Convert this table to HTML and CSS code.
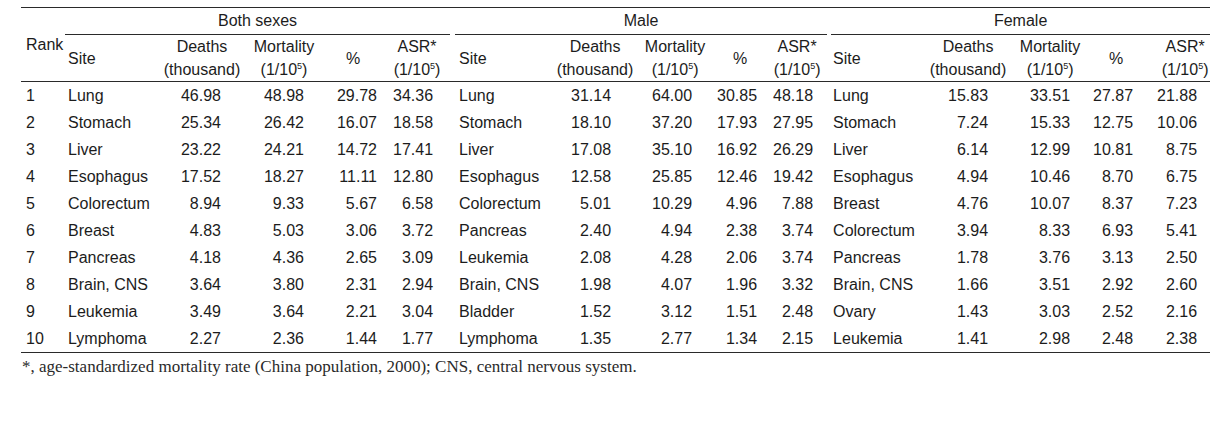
FILE: index.html
```html
<!DOCTYPE html>
<html>
<head>
<meta charset="utf-8">
<link rel="stylesheet" href="styles.css">
</head>
<body>
<div class="page">
<table class="tbl">
<colgroup>
<col class="c-rank">
<col class="c-site1"><col class="c-d"><col class="c-m"><col class="c-p1"><col class="c-a1">
<col class="c-site2"><col class="c-d"><col class="c-m2"><col class="c-p2"><col class="c-a2">
<col class="c-site3"><col class="c-d"><col class="c-m"><col class="c-p3"><col class="c-a3">
</colgroup>
<thead>
<tr class="grp-row">
<th class="rank-h" rowspan="2">Rank</th>
<th class="grp" colspan="5"><div class="grp-line g1">Both sexes</div></th>
<th class="grp" colspan="5"><div class="grp-line g2">Male</div></th>
<th class="grp" colspan="5"><div class="grp-line g3">Female</div></th>
</tr>
<tr class="sub-row">
<th class="site-h s1">Site</th><th>Deaths<br>(thousand)</th><th>Mortality<br>(1/10<sup>5</sup>)</th><th>%</th><th>ASR*<br>(1/10<sup>5</sup>)</th>
<th class="site-h s2">Site</th><th>Deaths<br>(thousand)</th><th>Mortality<br>(1/10<sup>5</sup>)</th><th>%</th><th>ASR*<br>(1/10<sup>5</sup>)</th>
<th class="site-h s3">Site</th><th>Deaths<br>(thousand)</th><th>Mortality<br>(1/10<sup>5</sup>)</th><th>%</th><th class="last-h">ASR*<br>(1/10<sup>5</sup>)</th>
</tr>
</thead>
<tbody>
<tr><td>1</td><td>Lung</td><td>46.98</td><td>48.98</td><td>29.78</td><td>34.36</td><td>Lung</td><td>31.14</td><td>64.00</td><td>30.85</td><td>48.18</td><td>Lung</td><td>15.83</td><td>33.51</td><td>27.87</td><td>21.88</td></tr>
<tr><td>2</td><td>Stomach</td><td>25.34</td><td>26.42</td><td>16.07</td><td>18.58</td><td>Stomach</td><td>18.10</td><td>37.20</td><td>17.93</td><td>27.95</td><td>Stomach</td><td>7.24</td><td>15.33</td><td>12.75</td><td>10.06</td></tr>
<tr><td>3</td><td>Liver</td><td>23.22</td><td>24.21</td><td>14.72</td><td>17.41</td><td>Liver</td><td>17.08</td><td>35.10</td><td>16.92</td><td>26.29</td><td>Liver</td><td>6.14</td><td>12.99</td><td>10.81</td><td>8.75</td></tr>
<tr><td>4</td><td>Esophagus</td><td>17.52</td><td>18.27</td><td>11.11</td><td>12.80</td><td>Esophagus</td><td>12.58</td><td>25.85</td><td>12.46</td><td>19.42</td><td>Esophagus</td><td>4.94</td><td>10.46</td><td>8.70</td><td>6.75</td></tr>
<tr><td>5</td><td>Colorectum</td><td>8.94</td><td>9.33</td><td>5.67</td><td>6.58</td><td>Colorectum</td><td>5.01</td><td>10.29</td><td>4.96</td><td>7.88</td><td>Breast</td><td>4.76</td><td>10.07</td><td>8.37</td><td>7.23</td></tr>
<tr><td>6</td><td>Breast</td><td>4.83</td><td>5.03</td><td>3.06</td><td>3.72</td><td>Pancreas</td><td>2.40</td><td>4.94</td><td>2.38</td><td>3.74</td><td>Colorectum</td><td>3.94</td><td>8.33</td><td>6.93</td><td>5.41</td></tr>
<tr><td>7</td><td>Pancreas</td><td>4.18</td><td>4.36</td><td>2.65</td><td>3.09</td><td>Leukemia</td><td>2.08</td><td>4.28</td><td>2.06</td><td>3.74</td><td>Pancreas</td><td>1.78</td><td>3.76</td><td>3.13</td><td>2.50</td></tr>
<tr><td>8</td><td>Brain, CNS</td><td>3.64</td><td>3.80</td><td>2.31</td><td>2.94</td><td>Brain, CNS</td><td>1.98</td><td>4.07</td><td>1.96</td><td>3.32</td><td>Brain, CNS</td><td>1.66</td><td>3.51</td><td>2.92</td><td>2.60</td></tr>
<tr><td>9</td><td>Leukemia</td><td>3.49</td><td>3.64</td><td>2.21</td><td>3.04</td><td>Bladder</td><td>1.52</td><td>3.12</td><td>1.51</td><td>2.48</td><td>Ovary</td><td>1.43</td><td>3.03</td><td>2.52</td><td>2.16</td></tr>
<tr><td>10</td><td>Lymphoma</td><td>2.27</td><td>2.36</td><td>1.44</td><td>1.77</td><td>Lymphoma</td><td>1.35</td><td>2.77</td><td>1.34</td><td>2.15</td><td>Leukemia</td><td>1.41</td><td>2.98</td><td>2.48</td><td>2.38</td></tr>
</tbody>
</table>
<p class="note">*, age-standardized mortality rate (China population, 2000); CNS, central nervous system.</p>
</div>
</body>
</html>
```

FILE: styles.css
```css
html, body {
  margin: 0;
  padding: 0;
  background: #ffffff;
}

.page {
  padding: 7px 0 0 21px;
}

.tbl {
  width: 1189px;
  table-layout: fixed;
  border-collapse: collapse;
  font-family: "Liberation Sans", Arial, sans-serif;
  font-size: 16px;
  color: #1c1c1c;
  border-top: 1px solid #2a2a2a;
  border-bottom: 1px solid #2a2a2a;
}

.c-rank { width: 44px; }
.c-site1 { width: 95px; }
.c-d { width: 84px; }
.c-m { width: 80px; }
.c-p1 { width: 58px; }
.c-a1 { width: 70px; }
.c-site2 { width: 101px; }
.c-m2 { width: 76px; }
.c-p2 { width: 54px; }
.c-a2 { width: 60px; }
.c-site3 { width: 99px; }
.c-p3 { width: 52px; }
.c-a3 { width: 68px; }

.tbl th {
  font-weight: normal;
  padding: 0;
  text-align: center;
  vertical-align: middle;
}

.grp-row .grp {
  height: 27px;
  vertical-align: top;
}

.grp-line {
  height: 26px;
  line-height: 25px;
  border-bottom: 1px solid #2a2a2a;
  text-align: center;
}

.g1 { margin-right: 2px; }
.g2 { margin-left: 3px; }
.g3 { margin-left: 4px; }

.rank-h {
  text-align: left !important;
  padding-left: 5px !important;
  border-bottom: 1px solid #2a2a2a;
}

.sub-row th {
  line-height: 23px;
  padding: 0;
  height: 44px;
  border-bottom: 1px solid #2a2a2a;
}

.sub-row .site-h {
  text-align: left;
}

.sub-row .s1 { padding-left: 3px; }
.sub-row .s2 { padding-left: 7px; }
.sub-row .s3 { padding-left: 6px; }
.sub-row .last-h { padding-left: 18px; }

.tbl sup {
  font-size: 9px;
  line-height: 0;
  vertical-align: 6px;
}

.tbl td {
  height: 27px;
  line-height: 27px;
  padding: 0;
  text-align: right;
  white-space: nowrap;
}

.tbl td:nth-child(1) { text-align: left; padding-left: 5px; }
.tbl td:nth-child(2) { text-align: left; padding-left: 3px; }
.tbl td:nth-child(3) { padding-right: 23px; }
.tbl td:nth-child(4) { padding-right: 20px; }
.tbl td:nth-child(5) { padding-right: 5px; }
.tbl td:nth-child(6) { padding-right: 19px; }
.tbl td:nth-child(7) { text-align: left; padding-left: 7px; }
.tbl td:nth-child(8) { padding-right: 26px; }
.tbl td:nth-child(9) { padding-right: 21px; }
.tbl td:nth-child(10) { padding-right: 10px; }
.tbl td:nth-child(11) { padding-right: 14px; }
.tbl td:nth-child(12) { text-align: left; padding-left: 6px; }
.tbl td:nth-child(13) { padding-right: 22px; }
.tbl td:nth-child(14) { padding-right: 20px; }
.tbl td:nth-child(15) { padding-right: 9px; }
.tbl td:nth-child(16) { padding-right: 13px; }

.note {
  margin: 5px 0 0 1px;
  font-family: "Liberation Serif", "Times New Roman", serif;
  font-size: 17px;
  line-height: 18px;
  color: #2a2a2a;
}
```
